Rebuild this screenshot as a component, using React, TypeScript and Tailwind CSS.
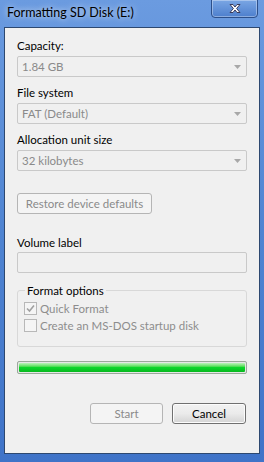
function Select({ value }: { value: string }) {
  return (
    <div className="mt-[3px] h-[21px] w-[230px] rounded-[2px] border border-[#c9c9c9] bg-[#f0f0f0] flex items-center justify-between pl-[4px] pr-[5px] text-[#8a8a8a]">
      <span>{value}</span>
      <svg width="7" height="4" viewBox="0 0 7 4">
        <path d="M0 0h7L3.5 4z" fill="#a8a8a8" />
      </svg>
    </div>
  );
}

function Check({ checked, label }: { checked?: boolean; label: string }) {
  return (
    <div className="flex items-center h-[13px] gap-[3px] text-[#8d8d8d]">
      <div className="w-[13px] h-[13px] border border-[#b8b8b8] bg-[#f5f5f5] flex items-center justify-center">
        {checked && (
          <svg width="9" height="9" viewBox="0 0 9 9">
            <path d="M1 4.5l2.5 2.5L8 1.5" stroke="#a0a0a0" strokeWidth="1.6" fill="none" />
          </svg>
        )}
      </div>
      <span className="leading-[15px]">{label}</span>
    </div>
  );
}

export default function App() {
  return (
    <div className="w-[264px] h-[462px] bg-gradient-to-b from-[#6b9be0] via-[#4f84d2] to-[#3f73c8] font-['Lato','Noto_Sans',sans-serif] text-[11.5px] text-black flex flex-col">
      {/* title bar */}
      <div className="relative h-[27px] shrink-0 flex items-center px-[7px]">
        <span className="text-[12.5px] [text-shadow:0_0_6px_rgba(255,255,255,0.9)]">Formatting SD Disk (E:)</span>
        <div className="absolute top-[-1px] right-[6px] w-[47px] h-[19px] rounded-b-[4px] border border-[#2c4f8a] bg-gradient-to-b from-[#7aa6e4] to-[#4d7fcd] shadow-[inset_0_0_0_1px_rgba(255,255,255,0.35)] flex items-center justify-center">
          <svg width="14" height="11" viewBox="0 0 14 11">
            <path d="M2 1.5h3l2 2.5 2-2.5h3L8.6 5.5 12 9.5H9L7 7 5 9.5H2l3.4-4z" fill="#fff" stroke="#3b3b5a" strokeWidth="1" strokeLinejoin="round" />
          </svg>
        </div>
      </div>

      {/* client area */}
      <div className="mx-[4px] h-[427px] border border-[#2d4870] bg-[#f0f0f0] flex flex-col pl-[12px] pt-[10px]">
        <div className="h-[15px] leading-[15px]">Capacity:</div>
        <Select value="1.84 GB" />

        <div className="mt-[8px] h-[15px] leading-[15px]">File system</div>
        <Select value="FAT (Default)" />

        <div className="mt-[8px] h-[15px] leading-[15px]">Allocation unit size</div>
        <Select value="32 kilobytes" />

        <div className="mt-[22px] h-[21px] w-[135px] rounded-[3px] border border-[#b5b5b5] bg-[#f4f4f4] flex items-center justify-center text-[#8a8a8a]">
          Restore device defaults
        </div>

        <div className="mt-[21px] h-[15px] leading-[15px]">Volume label</div>
        <div className="mt-[2px] h-[21px] w-[230px] rounded-[2px] border border-[#c9c9c9] bg-[#f0f0f0]" />

        <fieldset className="mt-[10px] w-[230px] h-[64px] rounded-[3px] border border-[#d8d8d8] px-[6px] pt-[2px]">
          <legend className="px-[2px] ml-[1px] leading-[15px]">Format options</legend>
          <div className="flex flex-col gap-[4px] mt-[2px]">
            <Check checked label="Quick Format" />
            <Check label="Create an MS-DOS startup disk" />
          </div>
        </fieldset>

        <div className="mt-[14px] h-[13px] w-[230px] rounded-[2px] border border-[#9aa89a] p-[1px] bg-[#e6e6e6]">
          <div className="h-full w-full rounded-[1px] bg-gradient-to-b from-[#b9f3b9] via-[#0bd62a] to-[#08b81f]" />
        </div>

        <div className="mt-[29px] w-[229px] flex justify-end gap-[9px]">
          <div className="h-[21px] w-[73px] rounded-[3px] border border-[#b5b5b5] bg-[#f4f4f4] flex items-center justify-center text-[#8a8a8a]">
            Start
          </div>
          <div className="h-[21px] w-[74px] rounded-[3px] border border-[#707070] bg-gradient-to-b from-[#f2f2f2] via-[#ebebeb] to-[#d4d4d4] shadow-[inset_0_0_0_1px_#fcfcfc] flex items-center justify-center">
            Cancel
          </div>
        </div>
      </div>
    </div>
  );
}
